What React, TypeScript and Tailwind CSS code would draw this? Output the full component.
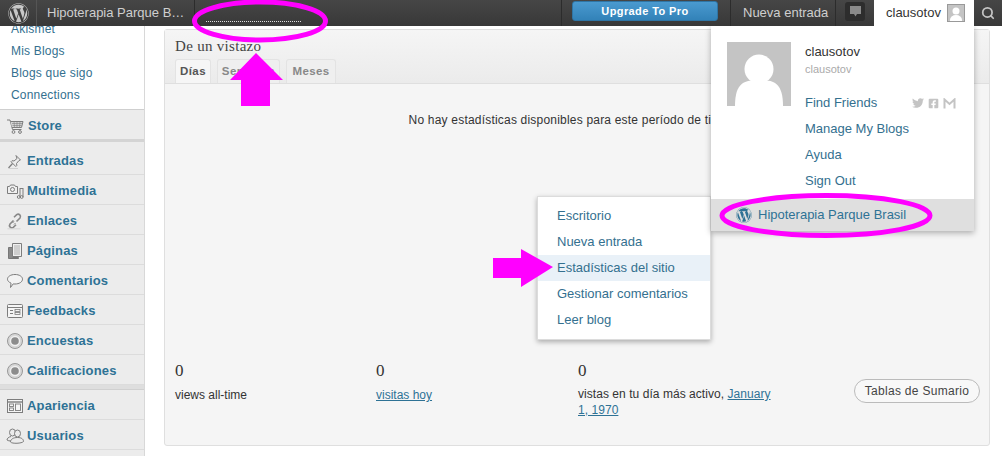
import React from "react";
import { FaWordpress, FaTwitter, FaFacebookSquare } from "react-icons/fa";
import { Search } from "lucide-react";

const Svg = ({ children }: { children: React.ReactNode }) => (
  <svg width="18" height="18" viewBox="0 0 18 18" fill="none" stroke="#7d7d7d" strokeWidth="1" className="shrink-0">{children}</svg>
);

const CartIcon = () => (
  <Svg>
    <path d="M1 3h3l2.500 9.500h9" />
    <path d="M4.600 4.500H17l-1.500 6H6" fill="#d5d5d5" />
    <path d="M6 6.500h10M6.500 8.500h9M8 4.500l.5 6M11 4.500v6M14 4.500l-.5 6" strokeWidth="0.6" />
    <circle cx="7.500" cy="15" r="1.400" />
    <circle cx="14" cy="15" r="1.400" />
  </Svg>
);
const PinIcon = () => (
  <Svg>
    <path d="M10 3.500l4.500 4.500-1.500.5-2.500 3 .3 2-1 1L5 9.700l1-1 2 .3 3-2.500z" fill="#ededed" />
    <path d="M6.500 11.500L2.500 16" strokeWidth="1.200" />
    <path d="M3 16.500h9" stroke="#d0d0d0" />
  </Svg>
);
const MediaIcon = () => (
  <Svg>
    <path d="M1.500 4.500h2l1-1.500h4l1 1.500h2v7h-10z" fill="#efefef" />
    <circle cx="6.500" cy="7.500" r="2" />
    <path d="M14 6v9M17 6v9M14 6.500h3" />
    <circle cx="12.700" cy="15" r="1.400" />
    <circle cx="15.700" cy="15" r="1.400" />
  </Svg>
);
const LinkIcon = () => (
  <Svg>
    <path d="M7.500 8.500L4 12a2.400 2.400 0 0 0 3.300 3.400l2.700-2.700" strokeWidth="1.600" stroke="#888" />
    <path d="M8 12.500l1.500-1.500M6.500 11L8 9.500" strokeWidth="1" stroke="#888" />
    <path d="M10.500 9.500L14 6a2.400 2.400 0 0 0-3.300-3.400L8 5.300" strokeWidth="1.600" stroke="#888" />
    <path d="M1.500 16.800h13" stroke="#d4d4d4" />
  </Svg>
);
const PagesIcon = () => (
  <Svg>
    <path d="M2.500 5.500h4v10h6v1h-10z" fill="#8a8a8a" stroke="#777" />
    <path d="M6.500 1.500h9v13h-9z" fill="#efefef" />
    <path d="M8 4h6M8 6h6M8 8h6M8 10h6M8 12h6" strokeWidth="0.8" stroke="#a0a0a0" />
  </Svg>
);
const CommentIcon = () => (
  <Svg>
    <path d="M9 2.500c4.300 0 7.500 2 7.500 4.700s-3.200 4.800-7.500 4.800c-.7 0-1.200 0-1.800-.1L4.500 15.500l.5-4.400C2.900 10.200 1.500 8.900 1.500 7.200 1.500 4.500 4.700 2.500 9 2.500z" fill="#f3f3f3" />
  </Svg>
);
const FeedbackIcon = () => (
  <Svg>
    <rect x="1.500" y="2.500" width="15" height="13" rx="1" fill="#f5f5f5" />
    <path d="M2 5.500h14" />
    <path d="M4 8.500h3M4 11.500h3" />
    <rect x="9" y="7.500" width="5" height="2" strokeWidth="0.8" />
    <rect x="9" y="10.500" width="5" height="2" strokeWidth="0.8" />
  </Svg>
);
const DiscIcon = () => (
  <Svg>
    <circle cx="9" cy="9" r="7.500" fill="#d6d6d6" stroke="#989898" />
    <circle cx="9" cy="9" r="5.200" fill="#f0f0f0" stroke="none" />
    <circle cx="9" cy="9" r="3.800" fill="#8c8c8c" stroke="none" />
  </Svg>
);
const AppearanceIcon = () => (
  <Svg>
    <rect x="1.500" y="2.500" width="15" height="13" fill="#f5f5f5" />
    <path d="M2 5h14" strokeWidth="1.400" />
    <rect x="3.500" y="7" width="4" height="2.500" strokeWidth="0.9" />
    <rect x="3.500" y="11" width="4" height="2.500" strokeWidth="0.9" />
    <rect x="9.500" y="7" width="5" height="6.500" strokeWidth="0.9" />
  </Svg>
);
const UsersIcon = () => (
  <Svg>
    <ellipse cx="6.500" cy="5.500" rx="3" ry="3.500" />
    <path d="M5 9.500C2.500 10 1 11.500 1 13c1 .8 2.500 1 4 1" />
    <ellipse cx="11.500" cy="6.500" rx="3" ry="3.500" fill="#ececec" />
    <path d="M4.500 15c0-2.500 2.500-4.500 7-4.500s6 2 6 4c-1.500 2-11.500 2.500-13 .5z" fill="#ececec" />
  </Svg>
);

const subItems = ["Akismet", "Mis Blogs", "Blogs que sigo", "Connections"];
const group1 = [
  { label: "Entradas", Icon: PinIcon },
  { label: "Multimedia", Icon: MediaIcon },
  { label: "Enlaces", Icon: LinkIcon },
  { label: "Páginas", Icon: PagesIcon },
  { label: "Comentarios", Icon: CommentIcon },
  { label: "Feedbacks", Icon: FeedbackIcon },
  { label: "Encuestas", Icon: DiscIcon },
  { label: "Calificaciones", Icon: DiscIcon },
];
const group2 = [
  { label: "Apariencia", Icon: AppearanceIcon },
  { label: "Usuarios", Icon: UsersIcon },
];
const menuItems = ["Escritorio", "Nueva entrada", "Estadísticas del sitio", "Gestionar comentarios", "Leer blog"];

function SideRow({ label, Icon }: { label: string; Icon: () => React.ReactElement }) {
  return (
    <div className="h-[30px] flex items-center pl-[6px] pt-[2px] gap-[3px] border-b border-[#dcdcdc]">
      <Icon />
      <span className="text-[13px] font-bold text-[#2e7295] tracking-[0.15px]">{label}</span>
    </div>
  );
}

export default function App() {
  return (
    <div className="relative w-[1002px] h-[456px] overflow-hidden bg-white font-['Liberation_Sans',Arial,sans-serif] text-[12px] text-[#333]">
      {/* Top bar */}
      <header className="relative z-20 h-[26px] bg-gradient-to-b from-[#464646] to-[#383838] flex items-stretch text-[#cfcfcf]">
        <div className="w-[37px] flex items-center justify-center border-r border-[#555]">
          <FaWordpress size={21} className="text-[#c8c8c8]" />
        </div>
        <div className="w-[158px] pl-[10px] flex items-center text-[13px] whitespace-nowrap border-r border-[#2c2c2c]">Hipoterapia Parque B…</div>
        <div className="flex-1 flex items-end pl-[11px] pb-[4px]">
          <div className="w-[95px] border-t border-dotted border-[#ddd]" />
        </div>
        <div className="w-[170px] border-l border-[#2c2c2c] border-r flex items-start pl-[10px] pt-[1px]">
          <div className="w-[146px] h-[20px] rounded-[3px] bg-gradient-to-b from-[#4a9ad0] to-[#3282b8] border border-[#2f75a5] text-white font-bold text-[11px] tracking-[0.4px] flex items-center justify-center">Upgrade To Pro</div>
        </div>
        <div className="w-[105px] flex items-center pl-[12px] text-[13px] whitespace-nowrap border-r border-[#2c2c2c]">Nueva entrada</div>
        <div className="w-[38px] flex items-start pl-[9px] pt-[2px]">
          <div className="w-[20px] h-[19px] rounded-[3px] bg-[#2d2d2d] flex items-center justify-center">
            <svg width="11" height="11" viewBox="0 0 11 11"><path d="M0 0h11v8H7l-1.500 2.500L4 8H0z" fill="#8a8a8a" /></svg>
          </div>
        </div>
        <div className="w-[100px] bg-white text-[#333] flex items-center pl-[12px] gap-[6px] text-[13px]">
          <span>clausotov</span>
          <div className="w-[18px] h-[18px] bg-[#c4c4c4] border border-[#999] flex items-end justify-center overflow-hidden">
            <svg width="14" height="15" viewBox="0 0 14 15"><circle cx="7" cy="5" r="3.500" fill="#fff" /><ellipse cx="7" cy="14" rx="6" ry="5" fill="#fff" /></svg>
          </div>
        </div>
        <div className="w-[28px] flex items-center justify-center">
          <Search size={14} strokeWidth={3} className="text-[#c4c4c4]" />
        </div>
      </header>

      <div className="flex h-[430px]">
        {/* Sidebar */}
        <aside className="w-[145px] shrink-0 bg-[#ececec] border-r border-[#d8d8d8] shadow-[2px_0_4px_rgba(0,0,0,0.08)] overflow-hidden">
          <div className="bg-white h-[84px] border-b border-[#cfcfcf] flex flex-col justify-end pb-[3px] pl-[11px]">
            {subItems.map((s) => (
              <div key={s} className="h-[22px] shrink-0 leading-[22px] text-[12px] text-[#34708f] tracking-[0.2px]">{s}</div>
            ))}
          </div>
          <div className="h-[32px] flex items-center pl-[6px] pt-[2px] gap-[4px] border-b-[3px] border-[#d4d4d4] mb-[3px]">
            <CartIcon />
            <span className="text-[13px] font-bold text-[#2e7295] tracking-[0.15px]">Store</span>
          </div>
          {group1.map((r) => <SideRow key={r.label} {...r} />)}
          <div className="h-[5px] border-b border-[#d0d0d0] bg-[#dedede]" />
          {group2.map((r) => <SideRow key={r.label} {...r} />)}
        </aside>

        {/* Main */}
        <main className="flex-1 pl-[19px] pr-[12px] pt-[3px] pb-[10px] bg-white">
          <section className="h-full border border-[#dfdfdf] rounded-[3px] bg-[#f5f5f5] flex flex-col">
            <div className="h-[54px] bg-gradient-to-b from-[#f5f5f5] to-[#ebebeb] border-b border-[#dfdfdf] flex flex-col justify-between pl-[10px]">
              <h2 className="pt-[7px] font-['Liberation_Serif',serif] text-[15px] leading-[18px] tracking-[0.3px] text-[#444]">De un vistazo</h2>
              <div className="flex gap-[6px] text-[11.500px] font-bold text-[#888] tracking-[0.4px]">
                <div className="w-[36px] h-[24px] -mb-px bg-[#f6f6f6] border border-[#e3e3e3] border-b-0 rounded-t-[3px] text-[#555] flex items-center justify-center">Días</div>
                <div className="w-[63px] h-[24px] bg-[#efefef] border border-[#e3e3e3] border-b-0 rounded-t-[3px] flex items-center justify-center">Semanas</div>
                <div className="w-[50px] h-[24px] bg-[#efefef] border border-[#e3e3e3] border-b-0 rounded-t-[3px] flex items-center justify-center">Meses</div>
              </div>
            </div>
            <p className="mt-[28px] text-center text-[12px] leading-[16px] tracking-[0.2px] text-[#333]">No hay estadísticas disponibles para este período de tiempo.</p>
            <div className="mt-auto pb-[27px] pl-[10px] pr-[9px] flex items-start">
              <div className="w-[201px]">
                <div className="font-['Liberation_Serif',serif] text-[17px] leading-[20px] text-[#333]">0</div>
                <div className="mt-[5px] leading-[18px]">views all-time</div>
              </div>
              <div className="w-[202px]">
                <div className="font-['Liberation_Serif',serif] text-[17px] leading-[20px] text-[#333]">0</div>
                <div className="mt-[5px] leading-[18px] text-[#2e7295] underline">visitas hoy</div>
              </div>
              <div className="w-[200px]">
                <div className="font-['Liberation_Serif',serif] text-[17px] leading-[20px] text-[#333]">0</div>
                <div className="mt-[5px] leading-[16px] tracking-[0.05px]">vistas en tu día más activo, <span className="text-[#2e7295] underline">January 1, 1970</span></div>
              </div>
              <div className="ml-auto mt-[18px] w-[126px] h-[24px] rounded-full border border-[#bbb] bg-[#f8f8f8] flex items-center justify-center text-[12px] tracking-[0.3px] text-[#444]">Tablas de Sumario</div>
            </div>
          </section>
        </main>
      </div>

      {/* Site menu popup */}
      <nav className="absolute z-10 left-[537px] top-[196px] w-[174px] bg-white border border-[#dcdcdc] shadow-[0_2px_5px_rgba(0,0,0,0.3)] py-[6px]">
        {menuItems.map((m, i) => (
          <div key={m} className={i === 2 ? "h-[26px] flex items-center pl-[19px] text-[13px] text-[#34708f] bg-[#e9f1f8]" : "h-[26px] flex items-center pl-[19px] text-[13px] text-[#34708f]"}>{m}</div>
        ))}
      </nav>

      {/* User dropdown */}
      <div className="absolute z-10 left-[711px] top-[26px] w-[263px] h-[205px] bg-white shadow-[0_2px_6px_rgba(0,0,0,0.3)] flex flex-col">
        <div className="flex-1 flex pl-[16px] pt-[16px]">
          <div className="w-[64px] h-[64px] bg-[#c4c4c4] overflow-hidden shrink-0">
            <svg width="64" height="64" viewBox="0 0 64 64"><circle cx="32" cy="27" r="14.500" fill="#fff" /><path d="M8 64c0-24 10-26 24-26s24 2 24 26z" fill="#fff" /></svg>
          </div>
          <div className="ml-[14px] flex-1 pr-[18px]">
            <div className="h-[20px] leading-[20px] text-[13px] text-[#333]">clausotov</div>
            <div className="mt-[-1px] mb-[12px] h-[17px] leading-[17px] text-[11px] text-[#aaa]">clausotov</div>
            {["Find Friends", "Manage My Blogs", "Ayuda", "Sign Out"].map((t, i) => (
              <div key={t} className="h-[26px] flex items-center justify-between text-[13px] text-[#34708f]">
                <span>{t}</span>
                {i === 0 && (
                  <span className="flex items-center gap-[4px] text-[#c4c4c4]">
                    <FaTwitter size={12} />
                    <FaFacebookSquare size={11} />
                    <svg width="13" height="11" viewBox="0 0 13 11" fill="none" stroke="#c4c4c4" strokeWidth="2"><path d="M1.500 10.500V1.500L6.500 6l5-4.500v9" /></svg>
                  </span>
                )}
              </div>
            ))}
          </div>
        </div>
        <div className="h-[32px] bg-[#dfdfdf] flex items-center pl-[25px] gap-[6px] text-[13px] text-[#2e7295]">
          <FaWordpress size={16} />
          <span>Hipoterapia Parque Brasil</span>
        </div>
      </div>

      {/* Annotations drawn on the screenshot */}
      <svg className="absolute z-30 left-0 top-0 pointer-events-none" width="1002" height="456" viewBox="0 0 1002 456" fill="none">
        <ellipse cx="260" cy="21" rx="65.500" ry="19" stroke="#ff00ff" strokeWidth="5" />
        <ellipse cx="826" cy="215.500" rx="104" ry="20" stroke="#ff00ff" strokeWidth="5" />
        <path d="M256 53L283 80H270V106H241V80H230Z" fill="#ff00ff" />
        <path d="M553 267L521 249V258H493V278H521V287Z" fill="#ff00ff" />
      </svg>
    </div>
  );
}
